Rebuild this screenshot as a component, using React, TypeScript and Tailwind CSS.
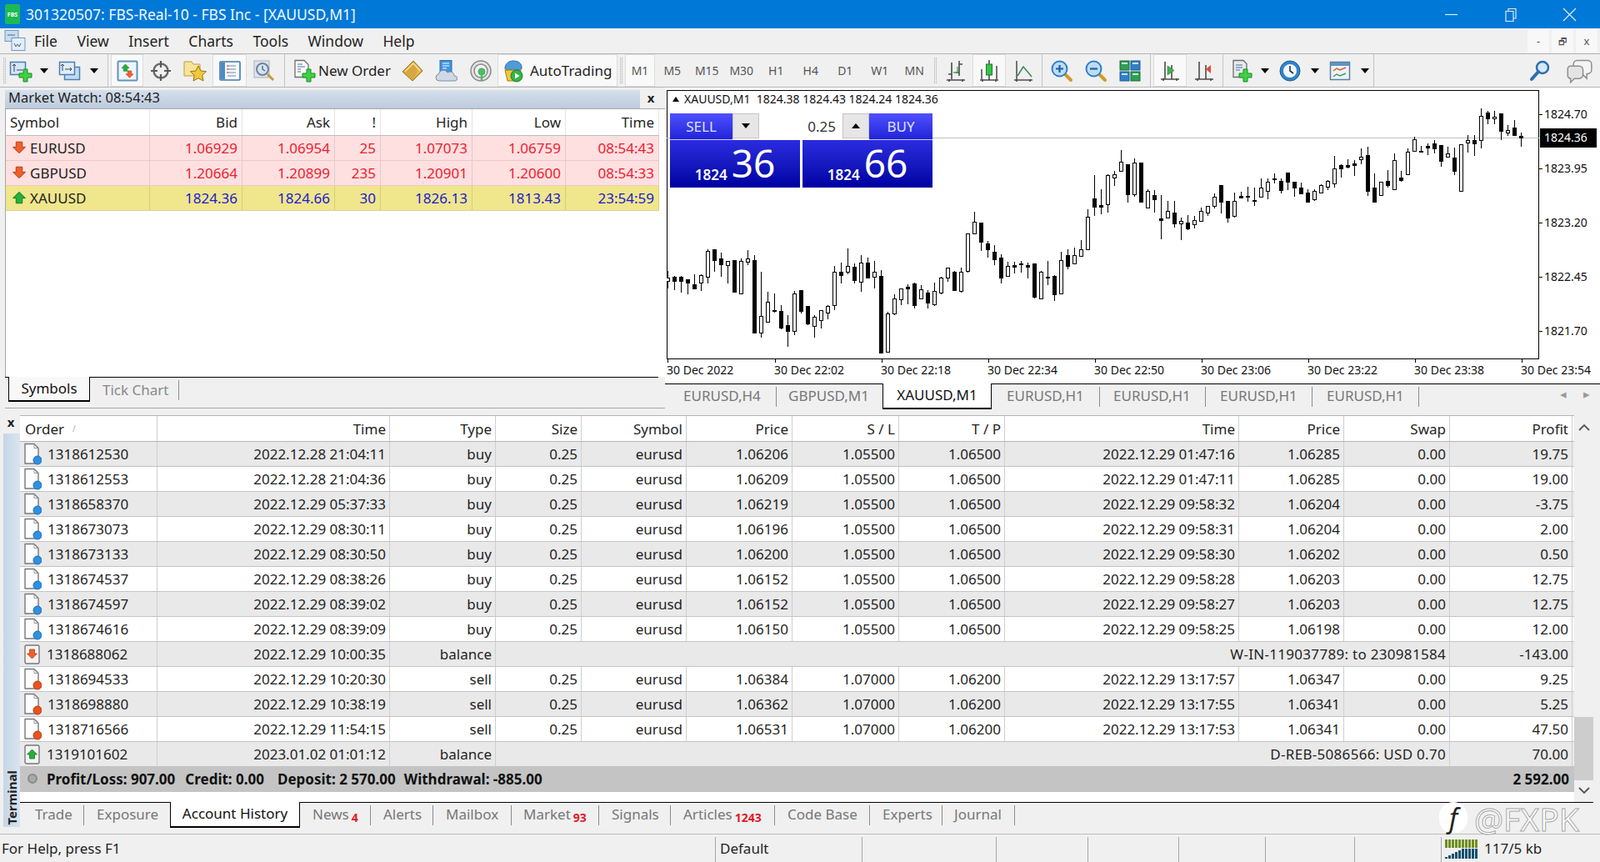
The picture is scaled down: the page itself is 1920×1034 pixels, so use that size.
import type { ReactNode } from 'react';

// [wick high, wick low, body top, body bottom, filled], read per chart crop
type Candle = [number, number, number, number, number];

const chartCrops: { ox: number; oy: number; x0: number; rows: Candle[] }[] = [
  {
    ox: 800,
    oy: 230,
    x0: 4,
    rows: [
      [285, 348, 310, 320, 0], [303, 355, 307, 320, 1], [303, 362, 307, 320, 1], [315, 368, 316, 326, 1],
      [297, 348, 334, 347, 1], [298, 356, 301, 328, 0], [208, 330, 214, 307, 0], [207, 288, 207, 245, 1],
      [220, 306, 240, 260, 1], [250, 330, 250, 263, 0], [245, 360, 245, 360, 1], [240, 365, 250, 365, 0],
      [210, 264, 241, 251, 0], [228, 510, 246, 507, 1], [288, 524, 448, 506, 0], [360, 467, 397, 467, 0],
      [366, 435, 427, 429, 1], [408, 495, 430, 488, 1], [444, 557, 481, 500, 1], [358, 516, 367, 500, 0],
      [354, 437, 354, 428, 1], [411, 480, 411, 473, 1], [445, 525, 451, 482, 0], [427, 492, 427, 461, 0],
      [408, 458, 411, 434, 0], [267, 425, 289, 407, 0], [255, 330, 289, 299, 1], [204, 296, 268, 287, 0],
      [258, 330, 270, 318, 1], [228, 360, 256, 323, 0], [238, 308, 255, 308, 1], [250, 348, 289, 307, 0],
      [282, 578, 304, 578, 1], [432, 575, 439, 575, 0],
    ],
  },
  {
    ox: 1060,
    oy: 170,
    x0: 40,
    rows: [
      [549, 625, 565, 618, 0], [529, 588, 529, 568, 0], [514, 585, 522, 527, 1], [508, 600, 510, 588, 1],
      [517, 568, 532, 565, 0], [535, 600, 544, 580, 1], [507, 590, 538, 586, 0], [487, 548, 490, 542, 0],
      [452, 504, 454, 488, 0], [465, 533, 469, 533, 1], [452, 542, 469, 536, 0], [331, 470, 331, 464, 0],
      [252, 332, 287, 331, 0], [291, 392, 291, 359, 1], [357, 417, 367, 386, 1], [373, 445, 397, 422, 1],
      [405, 510, 417, 488, 1], [433, 485, 448, 484, 0], [432, 474, 444, 449, 1], [428, 470, 437, 440, 1],
      [434, 492, 444, 449, 1], [438, 565, 438, 557, 1], [465, 565, 469, 565, 0], [430, 516, 486, 489, 1],
      [481, 573, 484, 548, 1], [396, 550, 427, 547, 0], [386, 458, 408, 446, 1], [381, 442, 409, 439, 0],
      [354, 412, 388, 412, 0], [243, 388, 271, 388, 0], [120, 266, 205, 233, 1], [170, 260, 229, 233, 1],
    ],
  },
  {
    ox: 1320,
    oy: 150,
    x0: 28,
    rows: [
      [178, 314, 181, 284, 0], [166, 218, 178, 188, 0], [90, 166, 133, 164, 0], [140, 278, 141, 248, 1],
      [120, 258, 136, 248, 0], [135, 280, 135, 275, 1], [232, 296, 238, 296, 0], [234, 314, 252, 266, 1],
      [251, 410, 336, 341, 1], [273, 332, 310, 332, 0], [273, 368, 315, 354, 1], [334, 413, 346, 353, 0],
      [323, 378, 351, 372, 1], [327, 371, 343, 358, 0], [297, 346, 310, 344, 0], [292, 326, 292, 314, 0],
      [246, 300, 259, 290, 0], [216, 318, 216, 275, 1], [273, 350, 273, 332, 1], [242, 332, 274, 326, 0],
      [240, 262, 255, 260, 1], [222, 276, 255, 258, 1], [225, 290, 270, 272, 1], [192, 257, 226, 257, 0],
      [192, 266, 205, 238, 0], [175, 209, 191, 194, 1], [193, 246, 202, 233, 1], [171, 233, 171, 203, 1],
      [204, 257, 204, 226, 1], [207, 246, 225, 245, 1], [231, 277, 244, 275, 1], [231, 272, 238, 266, 0],
      [213, 244, 216, 242, 0],
    ],
  },
  {
    ox: 1580,
    oy: 110,
    x0: 40,
    rows: [
      [318, 353, 320, 343, 0], [231, 345, 277, 331, 0], [262, 308, 265, 275, 1], [243, 275, 265, 269, 1],
      [246, 302, 259, 263, 1], [204, 260, 235, 244, 0], [198, 374, 228, 356, 1], [294, 398, 345, 396, 1],
      [325, 373, 325, 373, 0], [282, 344, 322, 335, 1], [223, 352, 247, 352, 0], [285, 323, 309, 317, 1],
      [205, 296, 217, 296, 0], [163, 214, 172, 214, 0], [195, 220, 213, 216, 1], [186, 227, 195, 200, 1],
      [175, 221, 186, 203, 1], [192, 269, 192, 248, 1], [197, 236, 223, 233, 0], [201, 299, 237, 284, 1],
      [190, 358, 190, 358, 0], [156, 218, 175, 182, 0], [156, 231, 175, 185, 1], [60, 203, 88, 175, 0],
      [70, 116, 75, 97, 1], [70, 116, 91, 97, 0], [78, 173, 78, 140, 1], [120, 158, 139, 146, 0],
      [102, 158, 130, 155, 1], [148, 197, 160, 166, 1],
    ],
  },
];

const priceLabels = [
  { y: 137, t: '1824.70' },
  { y: 202, t: '1823.95' },
  { y: 267, t: '1823.20' },
  { y: 332, t: '1822.45' },
  { y: 397, t: '1821.70' },
];

const timeLabels = [
  { x: 800, t: '30 Dec 2022' },
  { x: 929, t: '30 Dec 22:02' },
  { x: 1057, t: '30 Dec 22:18' },
  { x: 1185, t: '30 Dec 22:34' },
  { x: 1313, t: '30 Dec 22:50' },
  { x: 1441, t: '30 Dec 23:06' },
  { x: 1569, t: '30 Dec 23:22' },
  { x: 1697, t: '30 Dec 23:38' },
  { x: 1825, t: '30 Dec 23:54' },
];

const marketRows = [
  { sym: 'EURUSD', up: false, vals: ['1.06929', '1.06954', '25', '1.07073', '1.06759', '08:54:43'] },
  { sym: 'GBPUSD', up: false, vals: ['1.20664', '1.20899', '235', '1.20901', '1.20600', '08:54:33'] },
  { sym: 'XAUUSD', up: true, vals: ['1824.36', '1824.66', '30', '1826.13', '1813.43', '23:54:59'] },
];

type Deal = {
  order: string;
  time: string;
  type: string;
  price?: string;
  sl?: string;
  tp?: string;
  closeTime?: string;
  closePrice?: string;
  comment?: string;
  profit: string;
};

const deals: Deal[] = [
  { order: '1318612530', time: '2022.12.28 21:04:11', type: 'buy', price: '1.06206', sl: '1.05500', tp: '1.06500', closeTime: '2022.12.29 01:47:16', closePrice: '1.06285', profit: '19.75' },
  { order: '1318612553', time: '2022.12.28 21:04:36', type: 'buy', price: '1.06209', sl: '1.05500', tp: '1.06500', closeTime: '2022.12.29 01:47:11', closePrice: '1.06285', profit: '19.00' },
  { order: '1318658370', time: '2022.12.29 05:37:33', type: 'buy', price: '1.06219', sl: '1.05500', tp: '1.06500', closeTime: '2022.12.29 09:58:32', closePrice: '1.06204', profit: '-3.75' },
  { order: '1318673073', time: '2022.12.29 08:30:11', type: 'buy', price: '1.06196', sl: '1.05500', tp: '1.06500', closeTime: '2022.12.29 09:58:31', closePrice: '1.06204', profit: '2.00' },
  { order: '1318673133', time: '2022.12.29 08:30:50', type: 'buy', price: '1.06200', sl: '1.05500', tp: '1.06500', closeTime: '2022.12.29 09:58:30', closePrice: '1.06202', profit: '0.50' },
  { order: '1318674537', time: '2022.12.29 08:38:26', type: 'buy', price: '1.06152', sl: '1.05500', tp: '1.06500', closeTime: '2022.12.29 09:58:28', closePrice: '1.06203', profit: '12.75' },
  { order: '1318674597', time: '2022.12.29 08:39:02', type: 'buy', price: '1.06152', sl: '1.05500', tp: '1.06500', closeTime: '2022.12.29 09:58:27', closePrice: '1.06203', profit: '12.75' },
  { order: '1318674616', time: '2022.12.29 08:39:09', type: 'buy', price: '1.06150', sl: '1.05500', tp: '1.06500', closeTime: '2022.12.29 09:58:25', closePrice: '1.06198', profit: '12.00' },
  { order: '1318688062', time: '2022.12.29 10:00:35', type: 'balance', comment: 'W-IN-119037789: to 230981584', profit: '-143.00' },
  { order: '1318694533', time: '2022.12.29 10:20:30', type: 'sell', price: '1.06384', sl: '1.07000', tp: '1.06200', closeTime: '2022.12.29 13:17:57', closePrice: '1.06347', profit: '9.25' },
  { order: '1318698880', time: '2022.12.29 10:38:19', type: 'sell', price: '1.06362', sl: '1.07000', tp: '1.06200', closeTime: '2022.12.29 13:17:55', closePrice: '1.06341', profit: '5.25' },
  { order: '1318716566', time: '2022.12.29 11:54:15', type: 'sell', price: '1.06531', sl: '1.07000', tp: '1.06200', closeTime: '2022.12.29 13:17:53', closePrice: '1.06341', profit: '47.50' },
  { order: '1319101602', time: '2023.01.02 01:01:12', type: 'balance', comment: 'D-REB-5086566: USD 0.70', profit: '70.00' },
];

const headers = ['Order', 'Time', 'Type', 'Size', 'Symbol', 'Price', 'S / L', 'T / P', 'Time', 'Price', 'Swap', 'Profit'];

const gridCols = 'grid grid-cols-[165px_279px_127px_103px_126px_127px_128px_127px_281px_126px_127px_147px]';

const terminalTabs = [
  { label: 'Trade', cls: 'w-[77px] pl-[18px]' },
  { label: 'Exposure', cls: 'w-[103px] pl-[15px] border-r-0' },
  { label: 'Account History', active: true, cls: 'w-[156px]' },
  { label: 'News', badge: '4', cls: 'w-[85px] pl-[15px]' },
  { label: 'Alerts', cls: 'w-[75px] pl-[15px]' },
  { label: 'Mailbox', cls: 'w-[94px] pl-[15px]' },
  { label: 'Market', badge: '93', cls: 'w-[105px] pl-[14px]' },
  { label: 'Signals', cls: 'w-[86px] pl-[15px]' },
  { label: 'Articles', badge: '1243', cls: 'w-[125px] pl-[15px]' },
  { label: 'Code Base', cls: 'w-[114px] pl-[15px]' },
  { label: 'Experts', cls: 'w-[87px] pl-[15px]' },
  { label: 'Journal', cls: 'w-[87px] pl-[14px]' },
];

const chartTabs = [
  { label: 'EURUSD,H4', cls: 'w-[134px] pl-[22px]' },
  { label: 'GBPUSD,M1', cls: 'w-[127px] pl-[14px] border-r-0' },
  { label: 'XAUUSD,M1', active: true, cls: 'w-[131px]' },
  { label: 'EURUSD,H1', cls: 'w-[130px] pl-[18px]' },
  { label: 'EURUSD,H1', cls: 'w-[127px] pl-[16px]' },
  { label: 'EURUSD,H1', cls: 'w-[128px] pl-[17px]' },
  { label: 'EURUSD,H1', cls: 'w-[128px] pl-[17px]' },
];

const periods = ['M5', 'M15', 'M30', 'H1', 'H4', 'D1', 'W1', 'MN'];

function Ico({ children, size = 28 }: { children: ReactNode; size?: number }) {
  return (
    <svg width={size} height={size} viewBox="0 0 28 28" className="block shrink-0">
      {children}
    </svg>
  );
}

const GreenPlus = ({ x = 0, y = 0 }: { x?: number; y?: number }) => (
  <path
    transform={`translate(${x} ${y})`}
    d="M5 0h5v5h5v5h-5v5H5v-5H0V5h5z"
    fill="#3fd23f"
    stroke="#1c8a2a"
    strokeWidth="1"
  />
);

function NewChartIcon() {
  return (
    <Ico>
      <rect x="1.5" y="3.5" width="18" height="15" fill="#d6e6f6" stroke="#4a7fb5" strokeWidth="1.5" />
      <path d="M6 6v9M4 8l2-2 2 2M9 13h7" stroke="#345" strokeWidth="1" fill="none" />
      <GreenPlus x={12} y={12} />
    </Ico>
  );
}

function ProfilesIcon() {
  return (
    <Ico>
      <rect x="8.5" y="9.5" width="18" height="15" fill="#c6dbf0" stroke="#4a7fb5" strokeWidth="1.5" />
      <rect x="2.5" y="3.5" width="18" height="15" fill="#e2edf8" stroke="#4a7fb5" strokeWidth="1.5" />
      <path d="M6 6v8M4 8l2-2 2 2M9 12h8M15 10l2 2-2 2" stroke="#345" strokeWidth="1" fill="none" />
    </Ico>
  );
}

function Arrow({ up, x = 0, y = 0, s = 1 }: { up: boolean; x?: number; y?: number; s?: number }) {
  return up ? (
    <path
      transform={`translate(${x} ${y}) scale(${s})`}
      d="M6 0l6 6H9v5H3V6H0z"
      fill="#25b03a"
      stroke="#127a25"
      strokeWidth="0.8"
    />
  ) : (
    <path
      transform={`translate(${x} ${y}) scale(${s})`}
      d="M3 0h6v5h3l-6 6-6-6h3z"
      fill="#f0602a"
      stroke="#b83a12"
      strokeWidth="0.8"
    />
  );
}

function MarketWatchIcon() {
  return (
    <Ico>
      <rect x="2.5" y="2.5" width="23" height="23" rx="1" fill="#eef5fb" stroke="#5f93c2" strokeWidth="2" />
      <Arrow up x={7} y={6} s={0.75} />
      <Arrow up={false} x={12} y={14} s={0.75} />
    </Ico>
  );
}

function CrosshairIcon() {
  return (
    <Ico>
      <circle cx="14" cy="14" r="8.5" fill="none" stroke="#6b6b6b" strokeWidth="2.5" />
      <path d="M14 2v8M14 18v8M2 14h8M18 14h8" stroke="#5a5a5a" strokeWidth="2.2" />
    </Ico>
  );
}

function FavoritesIcon() {
  return (
    <Ico>
      <path d="M1 3h9l2 3h8v14H1z" fill="#f8e39a" stroke="#c39b3a" strokeWidth="1" />
      <path d="M18 8l3 6 6.5.8-4.8 4.5 1.300 6.700-6-3.300-6 3.300 1.300-6.700-4.800-4.500 6.500-.8z" fill="#f0c93c" stroke="#94711a" strokeWidth="1" />
    </Ico>
  );
}

function NavigatorIcon() {
  return (
    <Ico>
      <rect x="2" y="3" width="24" height="22" rx="1" fill="#f4f8fc" stroke="#3d78ad" strokeWidth="1.6" />
      <rect x="3" y="4" width="5" height="20" fill="#4f8cc4" />
      <path d="M11 8h10M11 12h10M11 16h10M11 20h10" stroke="#7a8796" strokeWidth="1.2" />
      <path d="M10 8h2M10 12h2M10 16h2" stroke="#d33" strokeWidth="1.2" />
    </Ico>
  );
}

function TesterIcon() {
  return (
    <Ico>
      <rect x="2" y="2" width="18" height="20" fill="#dfe4ea" stroke="#a9b1ba" />
      <circle cx="12" cy="12" r="7" fill="#d5e4f2" stroke="#6f8298" strokeWidth="2" />
      <path d="M12 8v4l3 2" stroke="#3f5d7a" strokeWidth="1.3" fill="none" />
      <path d="M18 18l7 7" stroke="#c69a3b" strokeWidth="3" />
    </Ico>
  );
}

function NewOrderIcon() {
  return (
    <Ico>
      <path d="M3 1.5h11l5 5v15H3z" fill="#fafafa" stroke="#6e6e6e" strokeWidth="1.3" />
      <path d="M6 6h6M6 9h9M6 12h4M6 15h4" stroke="#4a6f96" strokeWidth="1.1" />
      <GreenPlus x={12} y={12} />
    </Ico>
  );
}

function GoldIcon() {
  return (
    <Ico>
      <path d="M15 2l11 12-12 12L2 15z" fill="#e4b54a" stroke="#8f6a1e" strokeWidth="1" />
      <path d="M15 2l5 12-6 12L2 15z" fill="#c99a34" opacity="0.55" />
      <path d="M5 15L15 5l8 9" fill="none" stroke="#f7e19a" strokeWidth="1.3" />
    </Ico>
  );
}

function CloudIcon() {
  return (
    <Ico>
      <rect x="6" y="1.5" width="14" height="17" fill="#3f95e2" stroke="#2a6fb0" />
      <path d="M9 5h8M9 8h8M9 11h5" stroke="#fff" strokeWidth="1.2" />
      <path d="M5 26a4 4 0 0 1-.8-7.900 6 6 0 0 1 11-2 5 5 0 0 1 8 3.900 3 3 0 0 1 .8 6z" fill="#cfd9e6" stroke="#7d8ca0" />
    </Ico>
  );
}

function SignalsIcon() {
  return (
    <Ico>
      <circle cx="14" cy="14" r="12" fill="#e3e3e3" stroke="#8a8a8a" strokeWidth="1.5" />
      <circle cx="14" cy="14" r="8" fill="#f1f1f1" stroke="#8a8a8a" strokeWidth="1.5" />
      <circle cx="15" cy="15" r="4" fill="#4fbf5c" stroke="#3a7" />
      <path d="M15 17v9" stroke="#4fbf5c" strokeWidth="2.5" />
    </Ico>
  );
}

function AutoTradingIcon() {
  return (
    <Ico>
      <path d="M4 11c0-5 4-9 10-9s10 3 10 8c0 2-1 3-3 3H7c-2 0-3-1-3-2z" fill="#4f9bd9" stroke="#2a6fa8" />
      <path d="M4 13h19l-2 13H7z" fill="#f1c83b" stroke="#a67f15" />
      <circle cx="18" cy="20" r="7" fill="#35b44a" stroke="#16802a" />
      <path d="M16 16.5v7l5.5-3.5z" fill="#fff" />
    </Ico>
  );
}

function BarIcon({ kind }: { kind: 'bar' | 'candle' | 'line' }) {
  return (
    <Ico>
      <path d="M3 25h22M6 24v3M22 24v3" stroke="#4b4b4b" strokeWidth="1.6" />
      {kind === 'bar' && (
        <>
          <path d="M9 4v20M9 18H5M18 2v18M18 6h4M18 16h-4" stroke="#4b4b4b" strokeWidth="1.6" fill="none" />
          <path d="M11 16h5v-7" stroke="#3faa4b" strokeWidth="1.4" fill="none" />
        </>
      )}
      {kind === 'candle' && (
        <>
          <path d="M14 1v24" stroke="#3c3c3c" strokeWidth="1.5" />
          <rect x="10.5" y="6" width="7" height="13" fill="#39c14a" stroke="#1a7a2a" />
          <path d="M5 12v12M23 8v16" stroke="#4b4b4b" strokeWidth="1.5" />
        </>
      )}
      {kind === 'line' && (
        <>
          <path d="M6 2v22" stroke="#4b4b4b" strokeWidth="1.5" />
          <path d="M7 20L14 9l10 12" stroke="#3c8f5a" strokeWidth="1.6" fill="none" />
        </>
      )}
    </Ico>
  );
}

function ZoomIcon({ plus }: { plus: boolean }) {
  return (
    <Ico>
      <path d="M17 17l8 8" stroke="#d09a2b" strokeWidth="4" strokeLinecap="round" />
      <circle cx="11.5" cy="11.5" r="9" fill="#bcdcf5" stroke="#2e80c7" strokeWidth="2" />
      <path d={plus ? 'M7 11.5h9M11.5 7v9' : 'M7 11.5h9'} stroke="#1d5f9c" strokeWidth="2.2" />
    </Ico>
  );
}

function TileIcon() {
  return (
    <Ico>
      <rect x="2" y="2" width="11" height="11" fill="#2f9f57" stroke="#1b6e39" />
      <rect x="15" y="2" width="11" height="11" fill="#2f80c7" stroke="#1c5c96" />
      <rect x="2" y="15" width="11" height="11" fill="#2f80c7" stroke="#1c5c96" />
      <rect x="15" y="15" width="11" height="11" fill="#2f9f57" stroke="#1b6e39" />
      <path d="M4 5h7M17 5h7M4 18h7M17 18h7" stroke="#fff" strokeWidth="1.5" />
    </Ico>
  );
}

function ScrollIcon({ shift }: { shift: boolean }) {
  return (
    <Ico>
      <path d="M3 24h22M6 23v3M22 23v3M8 3v21M16 7v17" stroke="#4b4b4b" strokeWidth="1.6" />
      {shift ? (
        <path d="M22 7v10l-6-5z" fill="#e14c3a" />
      ) : (
        <path d="M11 8v11l8-5.5z" fill="#3fb24b" stroke="#237a31" strokeWidth="0.6" />
      )}
    </Ico>
  );
}

function IndicatorsIcon() {
  return (
    <Ico>
      <path d="M3 1.5h12l4 4v16H3z" fill="#e6ebf0" stroke="#6e6e6e" strokeWidth="1.3" />
      <path d="M6 7h8M6 10h8M6 13h5" stroke="#4a6f96" strokeWidth="1.2" />
      <GreenPlus x={10} y={12} />
    </Ico>
  );
}

function ClockIcon() {
  return (
    <Ico>
      <circle cx="14" cy="14" r="12" fill="#2f84cc" stroke="#1b5c95" />
      <circle cx="14" cy="14" r="8" fill="#f4f8fc" />
      <path d="M14 8v6l4 3" stroke="#234" strokeWidth="1.6" fill="none" />
    </Ico>
  );
}

function TemplatesIcon() {
  return (
    <Ico>
      <rect x="2.5" y="3.5" width="23" height="21" fill="#eef3f8" stroke="#5b7f9f" strokeWidth="1.5" />
      <rect x="3" y="4" width="22" height="4" fill="#5b95c7" />
      <path d="M6 14l4-3 4 2 7-3" stroke="#d4602a" strokeWidth="1.4" fill="none" />
      <path d="M6 21l4-3 4 2 7-3" stroke="#3f9f4f" strokeWidth="1.4" fill="none" />
    </Ico>
  );
}

function SearchIcon() {
  return (
    <Ico>
      <circle cx="17" cy="10" r="7" fill="#d5e8f8" stroke="#2d6fb0" strokeWidth="2.5" />
      <path d="M12 15l-8 9" stroke="#2d6fb0" strokeWidth="4" strokeLinecap="round" />
    </Ico>
  );
}

function ChatIcon() {
  return (
    <Ico size={32}>
      <path d="M12 3h11a4 4 0 0 1 4 4v6a4 4 0 0 1-4 4h-1v5l-5-5h-5a4 4 0 0 1-4-4V7a4 4 0 0 1 4-4z" fill="#f5f5f5" stroke="#8d8d8d" strokeWidth="1.3" />
      <path d="M5 9h9a4 4 0 0 1 4 4v5a4 4 0 0 1-4 4H9l-4 4v-4a3 3 0 0 1-3-3v-7a3 3 0 0 1 3-3z" fill="#e4e4e4" stroke="#8d8d8d" strokeWidth="1.3" />
    </Ico>
  );
}

function AppMenuIcon() {
  return (
    <svg width="28" height="28" viewBox="0 0 28 28" className="block">
      <rect x="2" y="1.5" width="16" height="13" fill="#c9dcf0" stroke="#6f98c0" />
      <rect x="10" y="10.5" width="16" height="15" fill="#e4eef8" stroke="#6f98c0" />
      <path d="M5 7h9M13 17l2 4 2-3 2 3 2-4" stroke="#44688c" strokeWidth="1" fill="none" />
    </svg>
  );
}

function Caret({ className = '' }: { className?: string }) {
  return <span className={`block h-0 w-0 border-x-[5px] border-t-[6px] border-x-transparent border-t-black ${className}`} />;
}

function Slot({ className, active, children }: { className: string; active?: boolean; children?: ReactNode }) {
  return (
    <div
      className={`flex h-full shrink-0 items-center justify-center ${className} ${
        active ? 'border border-[#dcdcdc] bg-[#f9f9f9]' : ''
      }`}
    >
      {children}
    </div>
  );
}

function Sep({ className }: { className: string }) {
  return (
    <div className={`flex h-full shrink-0 justify-center ${className}`}>
      <div className="h-full w-px bg-[#c4c4c4]" />
    </div>
  );
}

function Grip({ className }: { className: string }) {
  return (
    <div className={`flex h-full shrink-0 justify-center py-1 ${className}`}>
      <div className="h-full w-[3px] border-x border-dotted border-[#a8a8a8]" />
    </div>
  );
}

function Toolbar() {
  return (
    <div className="flex h-[40px] shrink-0 items-center border-b border-[#b4b4b4] bg-[#f0f0f0]">
      <Grip className="ml-[2px] w-[6px]" />
      <Slot className="ml-[2px] w-[30px]"><NewChartIcon /></Slot>
      <Slot className="w-[26px]"><Caret /></Slot>
      <Slot className="w-[34px]"><ProfilesIcon /></Slot>
      <Slot className="w-[26px]"><Caret /></Slot>
      <Sep className="w-[6px]" />
      <Slot className="ml-px w-[39px]" active><MarketWatchIcon /></Slot>
      <Slot className="w-[41px]"><CrosshairIcon /></Slot>
      <Slot className="w-[42px]"><FavoritesIcon /></Slot>
      <Slot className="w-[41px]" active><NavigatorIcon /></Slot>
      <Slot className="w-[42px]"><TesterIcon /></Slot>
      <Sep className="w-[6px]" />
      <Slot className="w-[130px] justify-start gap-[3px] pl-[7px]">
        <NewOrderIcon />
        <span>New Order</span>
      </Slot>
      <Slot className="w-[41px]"><GoldIcon /></Slot>
      <Slot className="w-[41px]"><CloudIcon /></Slot>
      <Slot className="w-[41px]"><SignalsIcon /></Slot>
      <Slot className="w-[144px] justify-start gap-[6px] pl-[4px]" active>
        <AutoTradingIcon />
        <span>AutoTrading</span>
      </Slot>
      <Grip className="w-[9px]" />
      <Slot className="w-[36px] text-[14px] text-[#555]" active>M1</Slot>
      {periods.map((p) => (
        <Slot key={p} className="w-[41.5px] text-[14px] text-[#555]">{p}</Slot>
      ))}
      <Grip className="w-[8px]" />
      <Slot className="w-[41px]"><BarIcon kind="bar" /></Slot>
      <Slot className="w-[40px]" active><BarIcon kind="candle" /></Slot>
      <Slot className="w-[41px]"><BarIcon kind="line" /></Slot>
      <Sep className="w-[5px]" />
      <Slot className="w-[42px]"><ZoomIcon plus /></Slot>
      <Slot className="w-[40px]"><ZoomIcon plus={false} /></Slot>
      <Slot className="w-[42px]"><TileIcon /></Slot>
      <Sep className="w-[7px]" />
      <Slot className="w-[40px]" active><ScrollIcon shift={false} /></Slot>
      <Slot className="w-[41px]"><ScrollIcon shift /></Slot>
      <Sep className="w-[5px]" />
      <Slot className="w-[42px]"><IndicatorsIcon /></Slot>
      <Slot className="w-[12px]"><Caret /></Slot>
      <Slot className="w-[48px]"><ClockIcon /></Slot>
      <Slot className="w-[12px]"><Caret /></Slot>
      <Slot className="w-[48px]"><TemplatesIcon /></Slot>
      <Slot className="w-[12px]"><Caret /></Slot>
      <Sep className="w-[8px]" />
      <Slot className="ml-auto w-[40px]"><SearchIcon /></Slot>
      <Slot className="mr-[5px] ml-[7px] w-[40px]"><ChatIcon /></Slot>
    </div>
  );
}

function CandleChart() {
  return (
    <svg width="1120" height="352" viewBox="800 108 1120 352" className="block" shapeRendering="crispEdges">
      <rect x="800.5" y="108.5" width="1046" height="322" fill="#fff" stroke="#000" strokeWidth="1.5" />
      <line x1="800" y1="165.5" x2="1847" y2="165.5" stroke="#c0c0c0" />
      {chartCrops.map((crop) =>
        crop.rows.map((c, i) => {
          const cx = Math.round(crop.ox + (crop.x0 + i * 24) / 3) + 0.5;
          const y = (v: number) => Math.round(crop.oy + v / 3);
          const top = y(c[2]);
          const bot = Math.max(y(c[3]), top + 1);
          return (
            <g key={`${crop.ox}-${i}`}>
              <line x1={cx} x2={cx} y1={y(c[0])} y2={y(c[1])} stroke="#000" />
              <rect
                x={cx - 2}
                y={top + 0.5}
                width={4}
                height={bot - top}
                fill={c[4] ? '#000' : '#fff'}
                stroke="#000"
              />
            </g>
          );
        }),
      )}
      {priceLabels.map((p) => (
        <g key={p.t}>
          <line x1="1847" x2="1851" y1={p.y + 0.5} y2={p.y + 0.5} stroke="#000" />
          <text x="1853" y={p.y + 5} fontSize="14" fill="#111">{p.t}</text>
        </g>
      ))}
      <rect x="1848" y="154" width="68" height="23" fill="#000" />
      <text x="1853" y="170" fontSize="14" fill="#fff">1824.36</text>
      {timeLabels.map((t) => (
        <g key={t.t}>
          <line x1={t.x + 1.5} x2={t.x + 1.5} y1="431" y2="435" stroke="#000" />
          <text x={t.x} y="449" fontSize="14" fill="#111">{t.t}</text>
        </g>
      ))}
    </svg>
  );
}

function OneClickPanel() {
  const btn =
    'flex h-[32px] items-center justify-center bg-gradient-to-b from-[#4f4fff] to-[#2222d8] text-[#dfe2ff] border-b border-b-[#c8c8ff]';
  const box =
    'flex h-[57px] w-[156px] items-end justify-center bg-gradient-to-b from-[#2b2be0] to-[#0000a0] pb-[10px] text-white';
  return (
    <div className="absolute left-[4px] top-[28px] w-[315px]">
      <div className="flex">
        <div className={`${btn} w-[75px]`}>SELL</div>
        <div className="flex h-[30px] w-[164px] bg-white">
          <div className="flex w-[32px] items-center justify-center border border-[#c4c4c4] bg-[#e6e6e6]"><Caret /></div>
          <div className="flex flex-1 items-center justify-end pr-[8px] text-[#333]">0.25</div>
          <div className="flex w-[32px] items-center justify-center border border-[#c4c4c4] bg-[#e6e6e6]"><Caret className="rotate-180" /></div>
        </div>
        <div className={`${btn} w-[76px]`}>BUY</div>
      </div>
      <div className="flex gap-[3px]">
        <div className={box}>
          <span className="mb-[-3px] mr-[5px] text-[17px] font-semibold leading-none">1824</span>
          <span className="text-[46px] leading-[40px]">36</span>
        </div>
        <div className={box}>
          <span className="mb-[-3px] mr-[5px] text-[17px] font-semibold leading-none">1824</span>
          <span className="text-[46px] leading-[40px]">66</span>
        </div>
      </div>
    </div>
  );
}

function Tab({ tab }: { tab: { label: string; active?: boolean; badge?: string; cls: string } }) {
  if (tab.active) {
    return (
      <div className={`-mt-px flex h-[31px] shrink-0 items-center justify-center border-x border-b-2 border-black bg-white pb-[3px] text-[#111] ${tab.cls}`}>
        {tab.label}
      </div>
    );
  }
  return (
    <div className={`mt-[3px] flex h-[24px] shrink-0 items-center border-r border-[#8c8c8c] pb-[3px] text-[#777] ${tab.cls}`}>
      <span>{tab.label}</span>
      {tab.badge && (
        <span className="ml-[3px] mt-[8px] text-[14px] font-bold leading-none text-[#e01a2a]">{tab.badge}</span>
      )}
    </div>
  );
}

function MarketWatch() {
  const cols = 'grid grid-cols-[173px_111px_111px_55px_110px_112px_112px]';
  const labels = ['Bid', 'Ask', '!', 'High', 'Low', 'Time'];
  return (
    <div className="flex h-[385px] w-[798px] shrink-0 flex-col pt-[3px] pl-[6px]">
      <div className="flex h-[22px] w-[784px] shrink-0 items-center">
        <div className="flex h-full w-[762px] items-center bg-gradient-to-b from-[#d5e0ec] to-[#bccbdc] pb-[3px] pl-[4px] text-[16.5px] text-[#222]">
          Market Watch: 08:54:43
        </div>
        <div className="flex flex-1 items-center justify-center pb-[3px] pl-[4px] text-[15px] font-bold leading-none">x</div>
      </div>
      <div className="flex-1 border-l border-t border-[#a8a8a8] bg-white">
        <div className={`${cols} h-[32px] w-[784px] border-b border-[#bdbdbd]`}>
          <div className="flex items-center border-r border-[#e4e4e4] pl-[5px]">Symbol</div>
          {labels.map((l) => (
            <div key={l} className="flex items-center justify-end border-r border-[#e4e4e4] pr-[5px]">{l}</div>
          ))}
        </div>
        {marketRows.map((r) => (
          <div
            key={r.sym}
            className={`${cols} h-[30px] w-[784px] border-b ${
              r.up ? 'border-[#d8d0a0] bg-[#f0e68c] text-[#1a1ad0]' : 'border-[#ecc8c8] bg-[#ffe0e0] text-[#ee1a30]'
            }`}
          >
            <div className="flex items-center gap-[5px] border-r border-[#0000001a] pb-px pl-[8px] text-[#222]">
              <svg width="16" height="16" viewBox="-0.5 -0.5 13 12" className="shrink-0">
                <Arrow up={r.up} />
              </svg>
              {r.sym}
            </div>
            {r.vals.map((v, i) => (
              <div key={i} className="flex items-center justify-end border-r border-[#0000001a] pb-px pr-[5px]">{v}</div>
            ))}
          </div>
        ))}
      </div>
      <div className="h-[30px] w-[784px] shrink-0 border-t border-black">
        <div className="flex">
          <div className="-mt-px ml-[4px] flex h-[30px] w-[98px] items-center justify-center border-x border-b-2 border-black bg-[#f8f8f8] pb-[2px] text-[#111]">
            Symbols
          </div>
          <div className="mt-[3px] flex h-[24px] w-[107px] items-center border-r border-[#8c8c8c] pb-[2px] pl-[15px] text-[#888]">
            Tick Chart
          </div>
        </div>
      </div>
      <div className="h-[8px] shrink-0 border-b border-[#a8a8a8]" />
    </div>
  );
}

function ChartArea() {
  return (
    <div className="flex h-[385px] flex-1 flex-col bg-white pt-[3px] pl-[2px]">
      <div className="relative h-[352px] shrink-0">
        <CandleChart />
        <div className="absolute left-[7px] top-[1px] flex items-center text-[14px] leading-[20px] text-[#111]">
          <span className="mr-[6px] block h-0 w-0 border-x-[4px] border-b-[6px] border-x-transparent border-b-black" />
          XAUUSD,M1&nbsp;&nbsp;1824.38 1824.43 1824.24 1824.36
        </div>
        <OneClickPanel />
      </div>
      <div className="-ml-[2px] flex h-[30px] shrink-0 border-t border-black bg-[#f0f0f0]">
        {chartTabs.map((t, i) => (
          <Tab key={i} tab={t} />
        ))}
        <div className="ml-auto mr-[12px] flex items-center gap-[20px] pb-[6px] text-[15px] text-[#999]">
          <span>◂</span>
          <span>▸</span>
        </div>
      </div>
    </div>
  );
}

function DocIcon({ sell }: { sell: boolean }) {
  return (
    <svg width="22" height="28" viewBox="0 0 22 28" className="shrink-0">
      <path d="M2 1.5h11l5 5V25H2z" fill="#fdfdfd" stroke="#77777f" strokeWidth="1.4" strokeLinejoin="round" />
      <path d="M13 1.5v5h5" fill="none" stroke="#9a9a9a" />
      <circle cx="17" cy="21" r="5" fill={sell ? '#e8531f' : '#2e90e0'} stroke={sell ? '#b83d12' : '#1f6fb5'} />
    </svg>
  );
}

function BalanceIcon({ up }: { up: boolean }) {
  return (
    <svg width="20" height="24" viewBox="0 0 20 24" className="ml-px shrink-0">
      <rect x="1" y="1" width="17" height="22" rx="2" fill="#f4f4f4" stroke="#77777f" strokeWidth="1.4" />
      <g transform="translate(3.5 6)">
        <Arrow up={up} />
      </g>
    </svg>
  );
}

function Terminal() {
  const cell = 'flex items-center justify-end overflow-hidden whitespace-nowrap border-r border-[#cfcfcf] pr-[4px]';
  return (
    <div className="flex h-[502px] shrink-0 bg-[#f0f0f0]">
      <div className="flex w-[24px] shrink-0 flex-col pl-[4px]">
        <div className="flex h-[22px] items-center justify-center pb-[6px] pr-[2px] text-[15px] font-bold leading-none">x</div>
        <div className="flex h-[472px] items-end justify-center bg-gradient-to-r from-[#c6d6e8] to-[#d9e4f0]">
          <span className="rotate-180 pt-[2px] font-['DejaVu_Sans',sans-serif] text-[15px] font-bold leading-none text-[#222] [writing-mode:vertical-rl]">
            Terminal
          </span>
        </div>
      </div>
      <div className="relative flex w-[1888px] shrink-0 flex-col">
        <div className="flex h-[464px] shrink-0">
          <div className="w-[1865px] shrink-0 bg-white">
            <div className={`${gridCols} h-[32px] border-y border-[#b4b4b4]`}>
              {headers.map((h, i) => (
                <div key={i} className={`${cell} ${i === 0 ? 'justify-start gap-[10px] pl-[6px]' : ''}`}>
                  {h}
                  {i === 0 && <span className="text-[10px] text-[#aaa]">/</span>}
                </div>
              ))}
            </div>
            {deals.map((d, i) => (
              <div key={d.order} className={`${gridCols} h-[30px] border-b border-[#c4c4c4] ${i % 2 === 0 ? 'bg-[#e9e9e9]' : 'bg-white'}`}>
                <div className={`${cell} justify-start gap-[7px] pl-[4px]`}>
                  {d.comment ? (
                    <BalanceIcon up={d.order === '1319101602'} />
                  ) : (
                    <DocIcon sell={d.type === 'sell'} />
                  )}
                  {d.order}
                </div>
                <div className={cell}>{d.time}</div>
                <div className={cell}>{d.type}</div>
                {d.comment ? (
                  <div className={`${cell} col-span-8 tracking-[0.3px]`}>{d.comment}</div>
                ) : (
                  <>
                    <div className={cell}>0.25</div>
                    <div className={cell}>eurusd</div>
                    <div className={cell}>{d.price}</div>
                    <div className={cell}>{d.sl}</div>
                    <div className={cell}>{d.tp}</div>
                    <div className={cell}>{d.closeTime}</div>
                    <div className={cell}>{d.closePrice}</div>
                    <div className={cell}>0.00</div>
                  </>
                )}
                <div className={cell}>{d.profit}</div>
              </div>
            ))}
            <div className="flex h-[30px] items-center justify-between bg-[#c4c4c4] pb-[2px] pl-[8px] pr-[6px] font-bold text-[#111]">
              <span className="flex items-center">
                <svg width="14" height="14" viewBox="0 0 14 14" className="mr-[10px]">
                  <circle cx="7" cy="7" r="5" fill="#a8a8a8" stroke="#8a8a8a" strokeWidth="2" />
                </svg>
                <span>Profit/Loss: 907.00</span>
                <span className="ml-[12px]">Credit: 0.00</span>
                <span className="ml-[16px]">Deposit: 2 570.00</span>
                <span className="ml-[10px]">Withdrawal: -885.00</span>
              </span>
              <span>2 592.00</span>
            </div>
          </div>
          <div className="flex w-[23px] shrink-0 flex-col items-center bg-[#f0f0f0] text-[#555]">
            <div className="flex h-[30px] items-center text-[13px]">
              <svg width="14" height="10" viewBox="0 0 14 10"><path d="M1 8l6-6 6 6" fill="none" stroke="#555" strokeWidth="1.8" /></svg>
            </div>
            <div className="mt-[332px] h-[76px] w-full bg-[#cdcdcd]" />
            <div className="flex h-[24px] items-center">
              <svg width="14" height="10" viewBox="0 0 14 10"><path d="M1 2l6 6 6-6" fill="none" stroke="#555" strokeWidth="1.8" /></svg>
            </div>
          </div>
        </div>
        <div className="flex h-[30px] w-[1888px] shrink-0 border-t border-black">
          {terminalTabs.map((t) => (
            <Tab key={t.label} tab={t} />
          ))}
        </div>
        <div className="pointer-events-none absolute bottom-0 left-[1703px] flex h-[38px] items-center">
          <div className="flex h-[38px] w-[34px] items-center justify-center rounded-full bg-white font-['Liberation_Serif',serif] text-[32px] italic leading-none text-[#222]">
            f
          </div>
          <span className="ml-[8px] font-['Open_Sans',sans-serif] text-[39px] leading-none text-white [-webkit-text-stroke:1px_#a8a8a8]">
            @FXPK
          </span>
        </div>
      </div>
    </div>
  );
}

function StatusBar() {
  const cells = ['w-[176px]', 'w-[161px]', 'w-[110px]', 'w-[109px]', 'w-[104px]', 'w-[107px]', 'w-[104px]'];
  return (
    <div className="flex h-[34px] shrink-0 border-t border-[#bdbdbd] bg-[#f0f0f0] pt-[3px]">
      <div className="flex w-[858px] shrink-0 items-center pb-[3px] pl-[2px]">For Help, press F1</div>
      {cells.map((c, i) => (
        <div key={c} className={`flex shrink-0 items-center border-l border-[#a8a8a8] pb-[3px] pl-[5px] ${c}`}>
          {i === 0 ? 'Default' : ''}
        </div>
      ))}
      <div className="flex items-center gap-[7px] border-l border-[#a8a8a8] pb-[3px] pl-[4px]">
        <svg width="40" height="24" viewBox="0 0 40 24" shapeRendering="crispEdges">
          {[0, 1, 2, 3, 4, 5, 6, 7, 8, 9].map((i) => (
            <g key={i}>
              <rect x={i * 4} y="1" width="2.6" height="10" fill="#6f8f1e" />
              <rect x={i * 4} y={Math.max(12, 22 - i * 2)} width="2.6" height={24 - Math.max(12, 22 - i * 2)} fill="#12506e" />
            </g>
          ))}
        </svg>
        117/5 kb
      </div>
    </div>
  );
}

export default function App() {
  return (
    <div className="flex h-[1034px] w-[1920px] flex-col overflow-hidden bg-[#f0f0f0] font-['Noto_Sans','Liberation_Sans',sans-serif] text-[17px] leading-none text-[#1f1f1f]">
      <div className="flex h-[34px] shrink-0 items-center bg-[#0078d7] pl-[6px] text-[#f2f8fd]">
        <div className="flex h-[24px] w-[18px] items-center justify-center rounded-[2px] bg-[#1db954] text-[7px] font-bold text-white">
          FBS
        </div>
        <span className="ml-[7px] mt-px text-[17.5px]">301320507: FBS-Real-10 - FBS Inc - [XAUUSD,M1]</span>
        <div className="ml-auto mr-[28px] flex items-center gap-[54px]">
          <svg width="17" height="17" viewBox="0 0 17 17"><path d="M1 8.5h15" stroke="#dcecf9" strokeWidth="1.2" /></svg>
          <svg width="17" height="17" viewBox="0 0 17 17"><path d="M3 4.5h9v12H3zM6 4V1.5h9V13h-3" fill="none" stroke="#dcecf9" strokeWidth="1.2" /></svg>
          <svg width="17" height="17" viewBox="0 0 17 17"><path d="M1 1l15 15M16 1L1 16" stroke="#dcecf9" strokeWidth="1.2" /></svg>
        </div>
      </div>
      <div className="flex h-[31px] shrink-0 items-center border-b border-[#b4b4b4] bg-[#f0f0f0] pl-[4px]">
        <AppMenuIcon />
        <div className="ml-[9px] mt-px flex gap-[23.5px] text-[17.5px] text-[#222]">
          {['File', 'View', 'Insert', 'Charts', 'Tools', 'Window', 'Help'].map((m) => (
            <span key={m}>{m}</span>
          ))}
        </div>
        <div className="ml-auto flex h-full items-center gap-[3px] pr-[3px] text-[13px] text-[#555]">
          <span className="flex h-[28px] w-[26px] items-center justify-center bg-[#f8f8f8]">-</span>
          <span className="flex h-[28px] w-[26px] items-center justify-center bg-[#f8f8f8] text-[11px]">🗗</span>
          <span className="flex h-[28px] w-[26px] items-center justify-center bg-[#f8f8f8]">x</span>
        </div>
      </div>
      <Toolbar />
      <div className="flex h-[385px] shrink-0">
        <MarketWatch />
        <ChartArea />
      </div>
      <div className="h-[8px] shrink-0" />
      <Terminal />
      <StatusBar />
    </div>
  );
}
